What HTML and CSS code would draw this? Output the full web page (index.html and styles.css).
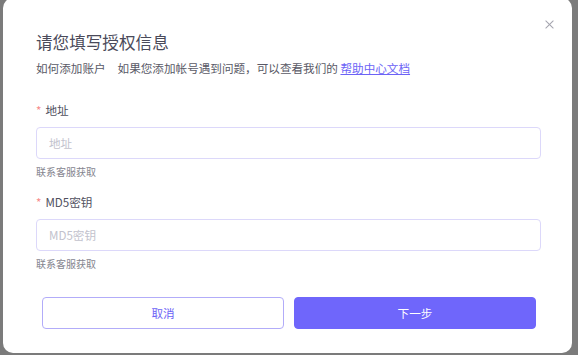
FILE: index.html
```html
<!DOCTYPE html>
<html>

<head>
    <meta name="viewport" content="width=device-width, initial-scale=1.0" />
    <title>授权信息</title>
    <link rel="stylesheet" href="styles.css">
</head>

<body>
    <div class="mask">
        <!-- DIALOG -->
        <div class="dialog">
            <span class="close-btn"></span>

            <div class="dialog-title">请您填写授权信息</div>
            <div class="dialog-sub">
                <span class="sub-first">如何添加账户</span>如果您添加帐号遇到问题，可以查看我们的 <a class="help-link" href="#">帮助中心文档</a>
            </div>

            <!-- FORM -->
            <form class="auth-form" action="">
                <div class="form-item">
                    <label class="form-label"><span class="req">*</span>地址</label>
                    <input class="form-input" placeholder="地址" autocomplete="off" />
                    <div class="form-hint">联系客服获取</div>
                </div>

                <div class="form-item">
                    <label class="form-label"><span class="req">*</span>MD5密钥</label>
                    <input class="form-input" placeholder="MD5密钥" autocomplete="off" />
                    <div class="form-hint">联系客服获取</div>
                </div>

                <div class="form-btns">
                    <button type="button" class="btn btn-cancel">取消</button>
                    <button type="button" class="btn btn-next">下一步</button>
                </div>
            </form>
        </div>
    </div>
</body>

</html>
```

FILE: styles.css
```css
body {
    margin: 0;
    background-color: #7b7b7b;
    font-family: "Noto Sans CJK SC", "Noto Sans", sans-serif;
    overflow: hidden;
}

.mask {
    height: 355px;
    padding-left: 3px;
    box-sizing: border-box;
}

.dialog {
    position: relative;
    width: 569px;
    height: 355px;
    margin-top: -2px;
    background-color: #fff;
    border-radius: 10px;
    padding: 32px 31px 0 33px;
    box-sizing: border-box;
}

.close-btn {
    position: absolute;
    top: 22px;
    right: 18px;
    width: 9px;
    height: 9px;
}

.close-btn::before,
.close-btn::after {
    content: "";
    position: absolute;
    left: -1px;
    top: 4px;
    width: 11px;
    height: 1px;
    background-color: #a3a3ad;
    transform: rotate(45deg);
}

.close-btn::after {
    transform: rotate(-45deg);
}

.dialog-title {
    font-size: 16.6px;
    line-height: 24px;
    color: #4a4a5a;
}

.dialog-sub {
    margin-top: 5px;
    font-size: 11.6px;
    line-height: 18px;
    color: #595966;
}

.sub-first {
    margin-right: 12px;
}

.help-link {
    color: #6c63f6;
    text-decoration: underline;
}

.auth-form {
    margin-top: 24px;
}

.form-item {
    margin-bottom: 14px;
}

.form-label {
    display: block;
    font-size: 11.6px;
    line-height: 18px;
    color: #50505e;
}

.req {
    color: #f78a8a;
    margin-right: 4px;
}

.form-input {
    display: block;
    width: 100%;
    height: 32px;
    margin-top: 8px;
    box-sizing: border-box;
    border: 1px solid #dcd8fa;
    border-radius: 4px;
    padding: 0 12px;
    font-family: inherit;
    font-size: 11.6px;
    color: #3e3e4e;
    outline: none;
}

.form-input::placeholder {
    color: #c2c2cd;
}

.form-hint {
    margin-top: 6px;
    font-size: 10px;
    line-height: 14px;
    color: #85858f;
}

.form-btns {
    display: flex;
    gap: 10px;
    margin-top: 26px;
    padding: 0 5px 0 6px;
}

.btn {
    flex: 1;
    height: 32px;
    border-radius: 4px;
    font-family: inherit;
    font-size: 11.6px;
    cursor: pointer;
}

.btn-cancel {
    background-color: #fff;
    border: 1px solid #b2acf9;
    color: #6c63f6;
}

.btn-next {
    background-color: #6f66fb;
    border: 1px solid #6f66fb;
    color: #fff;
}
```
